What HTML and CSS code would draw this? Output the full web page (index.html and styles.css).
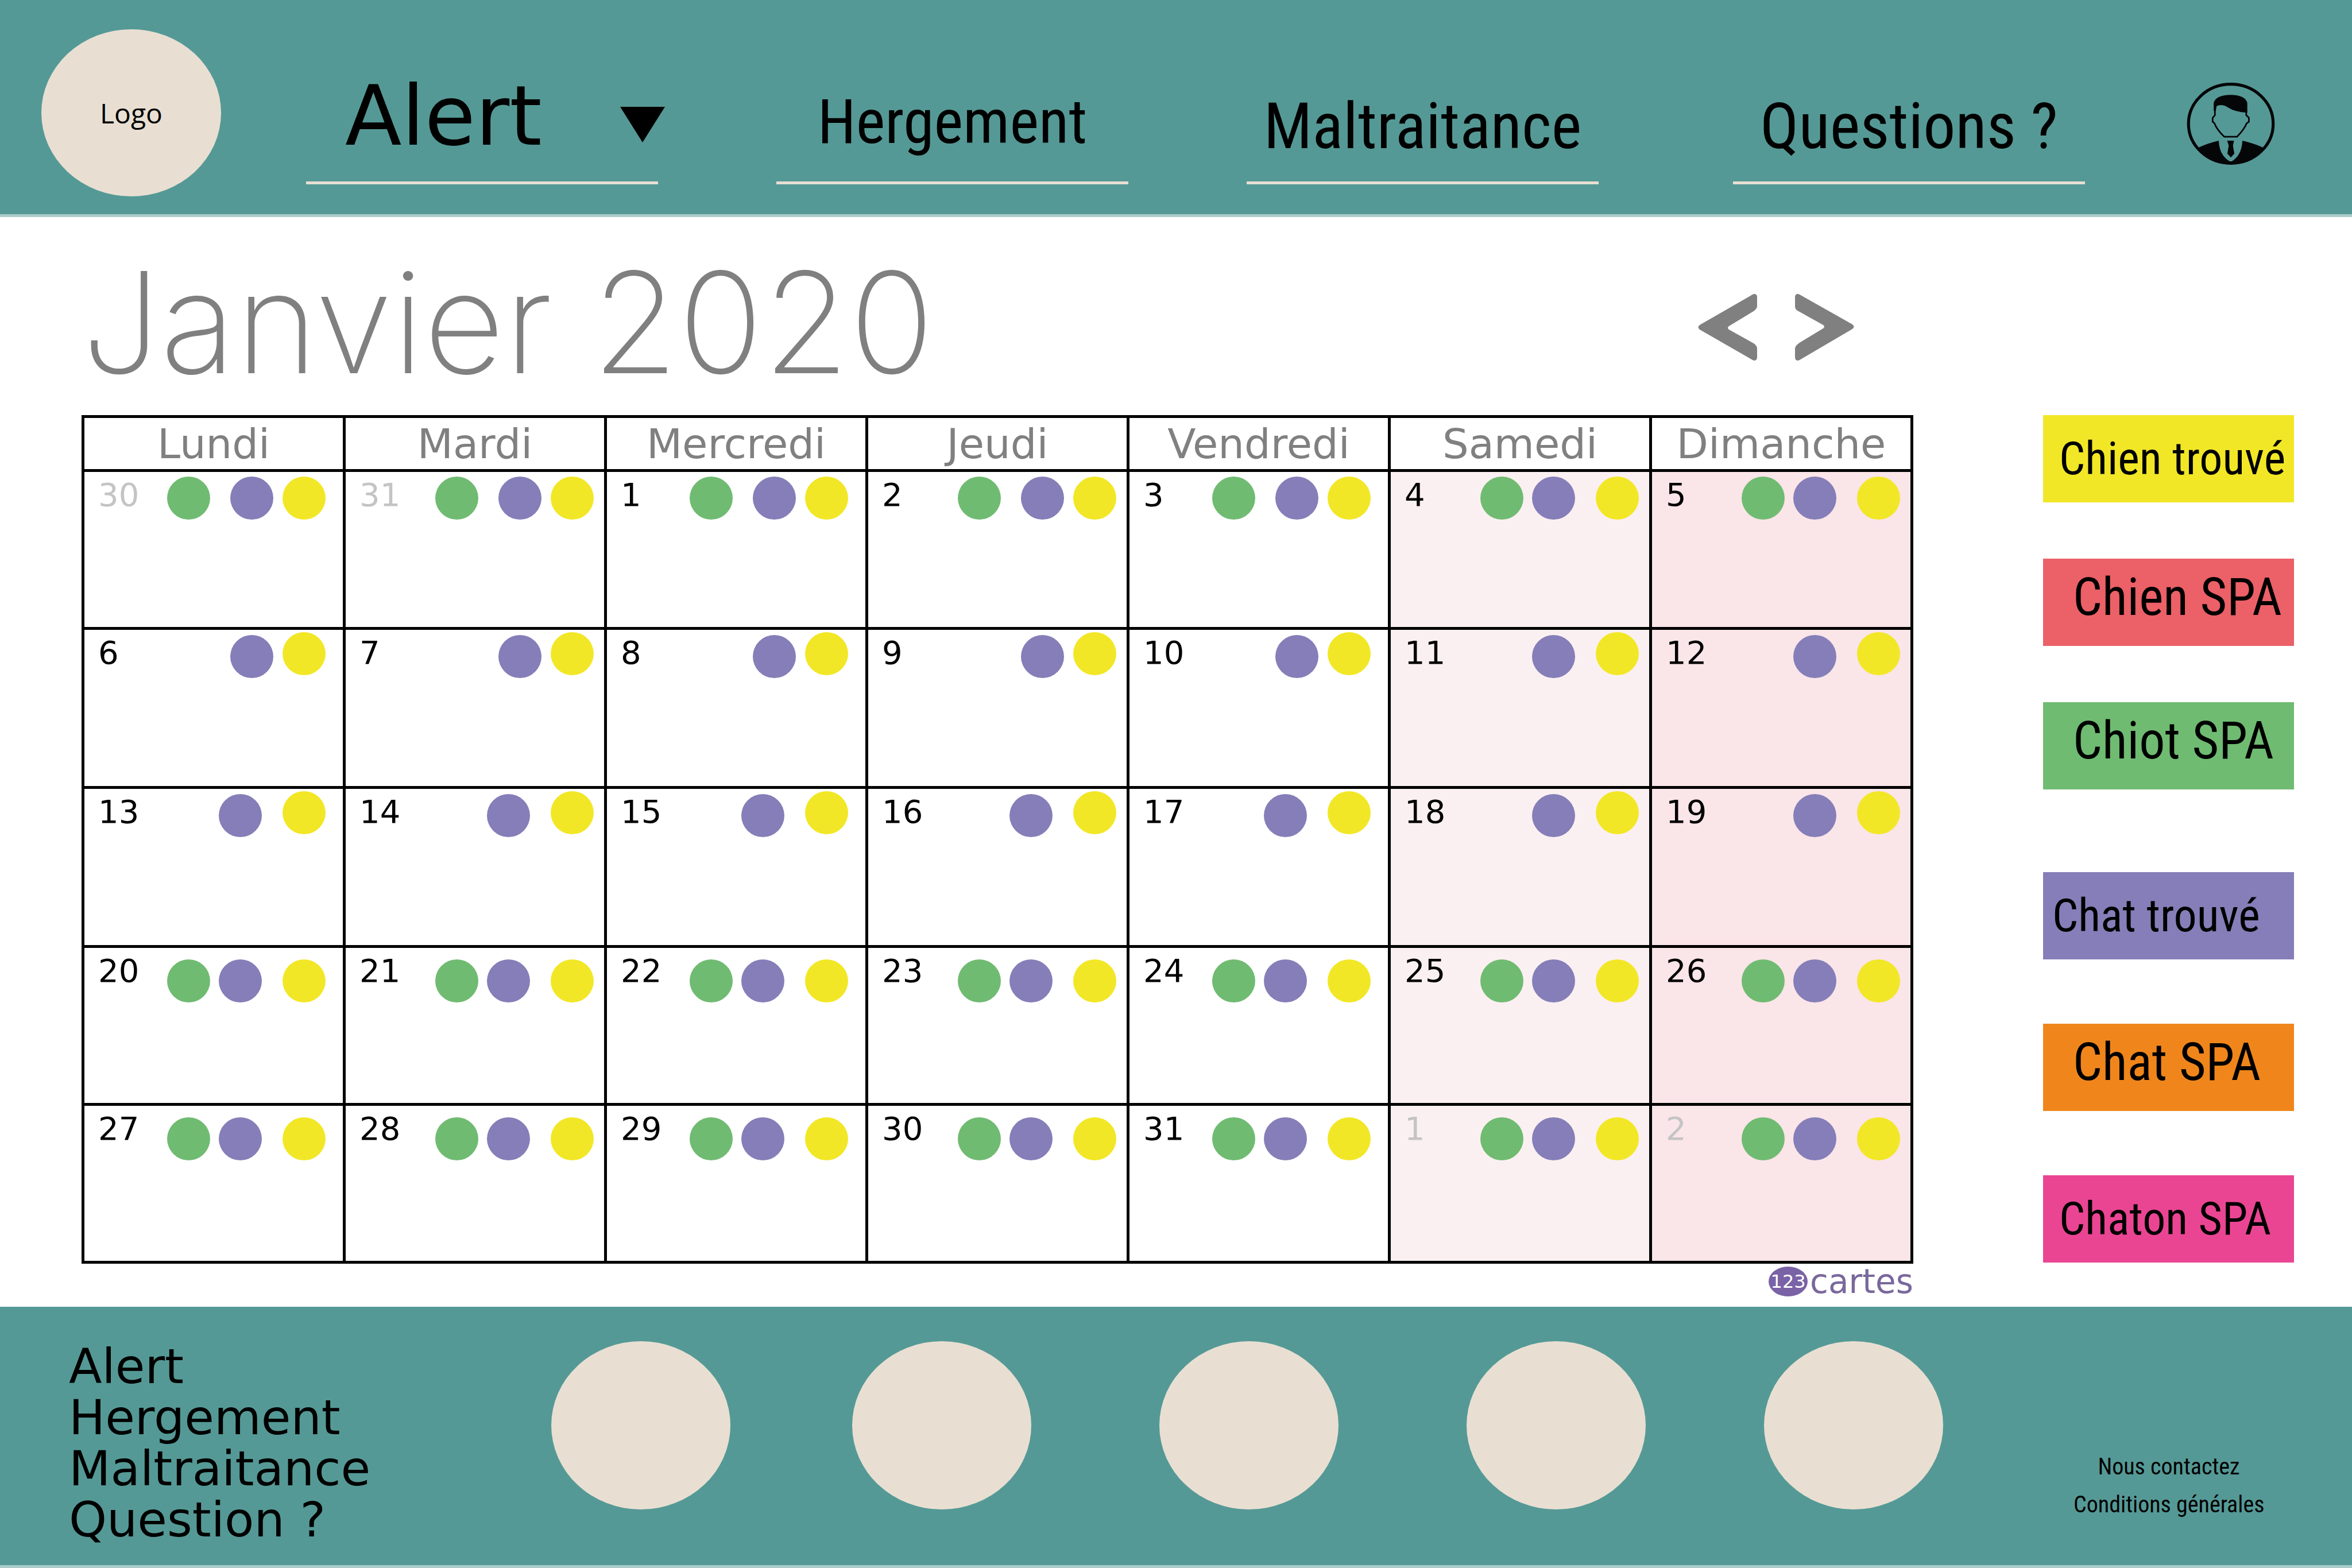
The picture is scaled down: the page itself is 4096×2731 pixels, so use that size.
FILE: index.html
```html
<!DOCTYPE html>
<html lang="fr">
<head>
<meta charset="utf-8">
<meta name="viewport" content="width=device-width, initial-scale=1">
<title>Janvier 2020</title>
<link rel="stylesheet" href="styles.css">
</head>
<body>
<header class="site-header">
  <a class="logo" href="#">Logo</a>
  <nav class="main-nav">
    <a class="nav-item nav-item--wide" href="#"><span class="nav-label">Alert</span>
      <svg class="caret" viewBox="0 0 78 62" aria-hidden="true"><path d="M0 0H78L39 62Z"/></svg>
    </a>
    <a class="nav-item nav-item--medium" href="#">Hergement</a>
    <a class="nav-item nav-item--tall" href="#">Maltraitance</a>
    <a class="nav-item nav-item--tall nav-item--last" href="#">Questions ?</a>
  </nav>
  <a class="account" href="#" aria-label="Mon compte">
    <svg class="account-icon" viewBox="100 78 512 482" aria-hidden="true">
      <ellipse cx="356" cy="319" rx="242" ry="226" fill="none" stroke="#050608" stroke-width="17"/>
      <path fill="#050608" d="M258 245V200Q268 156 355 154Q440 156 450 200V256Q375 250 340 226Q305 204 275 218L270 245Z"/>
      <path fill="none" stroke="#050608" stroke-width="9" d="M265 235V270L252 285V308L262 316Q275 352 318 393H392Q432 352 447 316L459 308V285L444 270V235"/>
      <path fill="#050608" d="M172 455Q220 432 287 416Q290 500 350 534H361Q418 500 422 416Q490 432 540 455Q480 545 356 545Q232 545 172 455Z"/>
      <path fill="#050608" d="M335 416H374L368 444L376 490L356 512L336 490L344 444Z"/>
    </svg>
  </a>
</header>

<main class="content">
  <section class="calendar">
    <div class="calendar-head">
      <h1 class="month">Janvier 2020</h1>
      <div class="pager">
        <button class="pager-button" type="button" aria-label="Mois précédent">
          <svg class="pager-icon" viewBox="0 0 104 116" aria-hidden="true"><path d="M95 1Q102 -2 103 5V20Q104 27 92 33L54 56Q50 59 54 62L97 86Q103 90 103 95V111Q102 118 95 115L3 62Q-2 58 3 54Z"/></svg>
        </button>
        <button class="pager-button" type="button" aria-label="Mois suivant">
          <svg class="pager-icon" viewBox="0 0 104 116" aria-hidden="true"><path d="M9 1Q2 -2 1 5V22Q1 27 7 30L50 54Q54 57 50 60L12 83Q0 90 1 96V111Q2 118 9 115L101 61Q106 57 101 53Z"/></svg>
        </button>
      </div>
    </div>
    <table class="grid">
      <thead>
        <tr><th>Lundi</th><th>Mardi</th><th>Mercredi</th><th>Jeudi</th><th>Vendredi</th><th>Samedi</th><th>Dimanche</th></tr>
      </thead>
      <tbody id="days"></tbody>
    </table>
    <p class="brand"><span class="brand-badge">123</span>cartes</p>
  </section>

  <ul class="legend">
    <li class="tag tag--yellow tag--inset">Chien trouvé</li>
    <li class="tag tag--red tag--spa">Chien SPA</li>
    <li class="tag tag--green tag--spa">Chiot SPA</li>
    <li class="tag tag--purple">Chat trouvé</li>
    <li class="tag tag--orange tag--spa">Chat SPA</li>
    <li class="tag tag--pink tag--inset">Chaton SPA</li>
  </ul>
</main>

<footer class="site-footer">
  <ul class="footer-links">
    <li><a href="#">Alert</a></li>
    <li><a href="#">Hergement</a></li>
    <li><a href="#">Maltraitance</a></li>
    <li><a href="#">Question ?</a></li>
  </ul>
  <div class="partners">
    <span class="disc"></span><span class="disc"></span><span class="disc"></span><span class="disc"></span><span class="disc"></span>
  </div>
  <ul class="legal">
    <li><a href="#">Nous contactez</a></li>
    <li><a href="#">Conditions générales</a></li>
  </ul>
</footer>
<script src="calendar.js"></script>
</body>
</html>
```
FILE: styles.css
```css
* { box-sizing: border-box; }

body {
  margin: 0;
  min-height: 100vh;
  display: flex;
  flex-direction: column;
  background: #fff;
  color: #000;
  font-family: "Open Sans", "Noto Sans", sans-serif;
}

a { color: inherit; text-decoration: none; }
ul { margin: 0; padding: 0; list-style: none; }

/* Header */
.site-header {
  display: flex;
  align-items: flex-start;
  height: 378px;
  padding: 51px 133px 0 72px;
  background: #559996;
  border-bottom: 5px solid #a9cccb;
}

.logo {
  flex: none;
  display: flex;
  align-items: center;
  justify-content: center;
  width: 313px;
  height: 291px;
  border-radius: 50%;
  background: #e8dfd2;
  font-size: 48px;
}

.main-nav {
  flex: 1;
  display: flex;
  gap: 206px;
  height: 270px;
  margin: 0 176px 0 148px;
}

.nav-item {
  flex: 1;
  display: flex;
  justify-content: center;
  align-items: flex-end;
  min-width: 0;
  border-bottom: 5px solid #e8dfd2;
  font-family: "Roboto Condensed", "Open Sans", sans-serif;
  line-height: 140px;
  white-space: nowrap;
}

.nav-item--wide {
  justify-content: flex-start;
  gap: 136px;
  padding-bottom: 44px;
  font-family: "DejaVu Sans", sans-serif;
  font-size: 144px;
}

.nav-item--wide .nav-label { margin-left: 68px; }

.nav-item--medium { padding-bottom: 34px; font-size: 108px; }
.nav-item--tall { padding-bottom: 26px; font-size: 112px; }
.nav-item--last { margin-left: 28px; }

.caret {
  flex: none;
  width: 78px;
  height: 62px;
  margin-bottom: 24px;
}

.account { margin-top: 91px; }
.account-icon { display: block; width: 156px; height: 147px; }

/* Main area */
.content {
  display: flex;
  gap: 226px;
  padding: 0 101px 0 142px;
}

.calendar { flex: 1; }

.calendar-head {
  display: flex;
  align-items: flex-start;
  justify-content: space-between;
  height: 345px;
  padding: 34px 103px 0 0;
}

.month {
  margin: 0;
  color: #808080;
  font: 200 244px/300px Inter, "DejaVu Sans", sans-serif;
}

.pager { display: flex; gap: 64px; padding-top: 100px; }

.pager-button {
  padding: 0;
  border: 0;
  background: none;
  cursor: pointer;
}

.pager-icon { display: block; width: 104px; height: 116px; fill: #808080; }

.grid {
  width: 100%;
  table-layout: fixed;
  border-collapse: collapse;
}

.grid th,
.grid td { border: 5px solid #000; padding: 0; }

.grid th {
  height: 94px;
  color: #808080;
  font: 400 72px/84px "DejaVu Sans", sans-serif;
}

.grid td { height: 275px; vertical-align: top; }
.grid .week--middle td { height: 277px; }
.grid td:nth-child(6) { background: #fbf0f1; }
.grid td:nth-child(7) { background: #fae5e8; }

.day {
  display: flex;
  justify-content: space-between;
  align-items: flex-start;
  padding: 8px 30px 0 24px;
}

.date {
  padding-top: 4px;
  font: 400 56px/56px "DejaVu Sans", sans-serif;
}

.date--outside { color: #c4c4c4; }

.dots { display: flex; }

.dot { width: 75px; height: 75px; border-radius: 50%; }
.dot--green { background: #70bb72; margin-right: 15px; }
.dot--purple { background: #857eb8; margin-right: 36px; }
.dot--yellow { background: #f2e726; }

/* The first two weeks keep the purple dot close to the yellow one on weekdays */
.week--early td:nth-child(-n+5) .dot--purple { margin-right: 16px; }
.week--early td:nth-child(-n+5) .dot--green { margin-right: 35px; }
.week--middle .dot--purple { margin-top: 5px; }
.week--middle .day { padding-top: 4px; }
.week--middle .date { padding-top: 8px; }
.week--low .day { padding-top: 20px; }
.week--low .date { margin-top: -8px; padding-top: 0; }

td:nth-child(2) .day,
td:nth-child(4) .day,
td:nth-child(6) .day,
td:nth-child(7) .day { padding-right: 18px; }

.brand {
  display: flex;
  align-items: center;
  justify-content: flex-end;
  gap: 4px;
  height: 75px;
  margin: 0;
  padding-bottom: 14px;
  color: #79689c;
  font: 400 58px/58px "DejaVu Sans", sans-serif;
}

.brand-badge {
  width: 68px;
  height: 52px;
  border-radius: 50%;
  background: #7a62a6;
  color: #fff;
  font-size: 32px;
  line-height: 52px;
  text-align: center;
}

/* Legend */
.legend {
  width: 437px;
  display: flex;
  flex-direction: column;
  gap: 98px;
  padding-top: 345px;
}

.tag {
  height: 152px;
  padding-left: 16px;
  font: 400 80px/152px "Roboto Condensed", "Open Sans", sans-serif;
  white-space: nowrap;
}

.tag--inset { padding-left: 28px; }
.tag--spa { padding-left: 52px; font-size: 90px; line-height: 136px; }
.tag--yellow { background: #f2e726; }
.tag--red { background: #ec6067; }
.tag--green { background: #70bb72; }
.tag--purple { background: #857eb8; margin-top: 46px; }
.tag--orange { background: #f0861b; margin-top: 14px; }
.tag--pink { background: #ea4593; margin-top: 14px; }

/* Footer */
.site-footer {
  flex: 1;
  display: flex;
  align-items: flex-start;
  padding: 60px 153px 0 120px;
  background: #559996;
  border-bottom: 5px solid #a9cccb;
}

.footer-links {
  flex: none;
  width: 840px;
  font: 400 84px/89px "DejaVu Sans", sans-serif;
}

.partners {
  flex: 1;
  display: flex;
  gap: 206px;
}

.disc {
  flex: none;
  width: 312px;
  height: 293px;
  border-radius: 50%;
  background: #e8dfd2;
}

.disc:nth-child(2) { margin-left: 6px; }
.disc:nth-child(3),
.disc:nth-child(4) { margin-left: 17px; }

.legal {
  flex: none;
  width: 332px;
  margin-top: 186px;
  font: 400 40px/66px "Roboto Condensed", "Open Sans", sans-serif;
  text-align: center;
  white-space: nowrap;
}
```
FILE: calendar.js
```js
// Each week: row modifier, the dates shown, and whether the green dot appears.
const weeks = [
  { name: 'week--early', dates: [30, 31, 1, 2, 3, 4, 5], green: true },
  { name: 'week--early week--middle', dates: [6, 7, 8, 9, 10, 11, 12], green: false },
  { name: 'week--middle', dates: [13, 14, 15, 16, 17, 18, 19], green: false },
  { name: 'week--low', dates: [20, 21, 22, 23, 24, 25, 26], green: true },
  { name: 'week--low', dates: [27, 28, 29, 30, 31, 1, 2], green: true },
];

const dot = (colour) => `<span class="dot dot--${colour}"></span>`;

document.getElementById('days').innerHTML = weeks.map((week, row) => {
  const cells = week.dates.map((date) => {
    const outside = (row === 0 && date > 20) || (row === 4 && date < 10);
    const dots = (week.green ? dot('green') : '') + dot('purple') + dot('yellow');
    return `<td><div class="day"><span class="date${outside ? ' date--outside' : ''}">${date}</span><span class="dots">${dots}</span></div></td>`;
  });
  return `<tr class="${week.name}">${cells.join('')}</tr>`;
}).join('');
```
